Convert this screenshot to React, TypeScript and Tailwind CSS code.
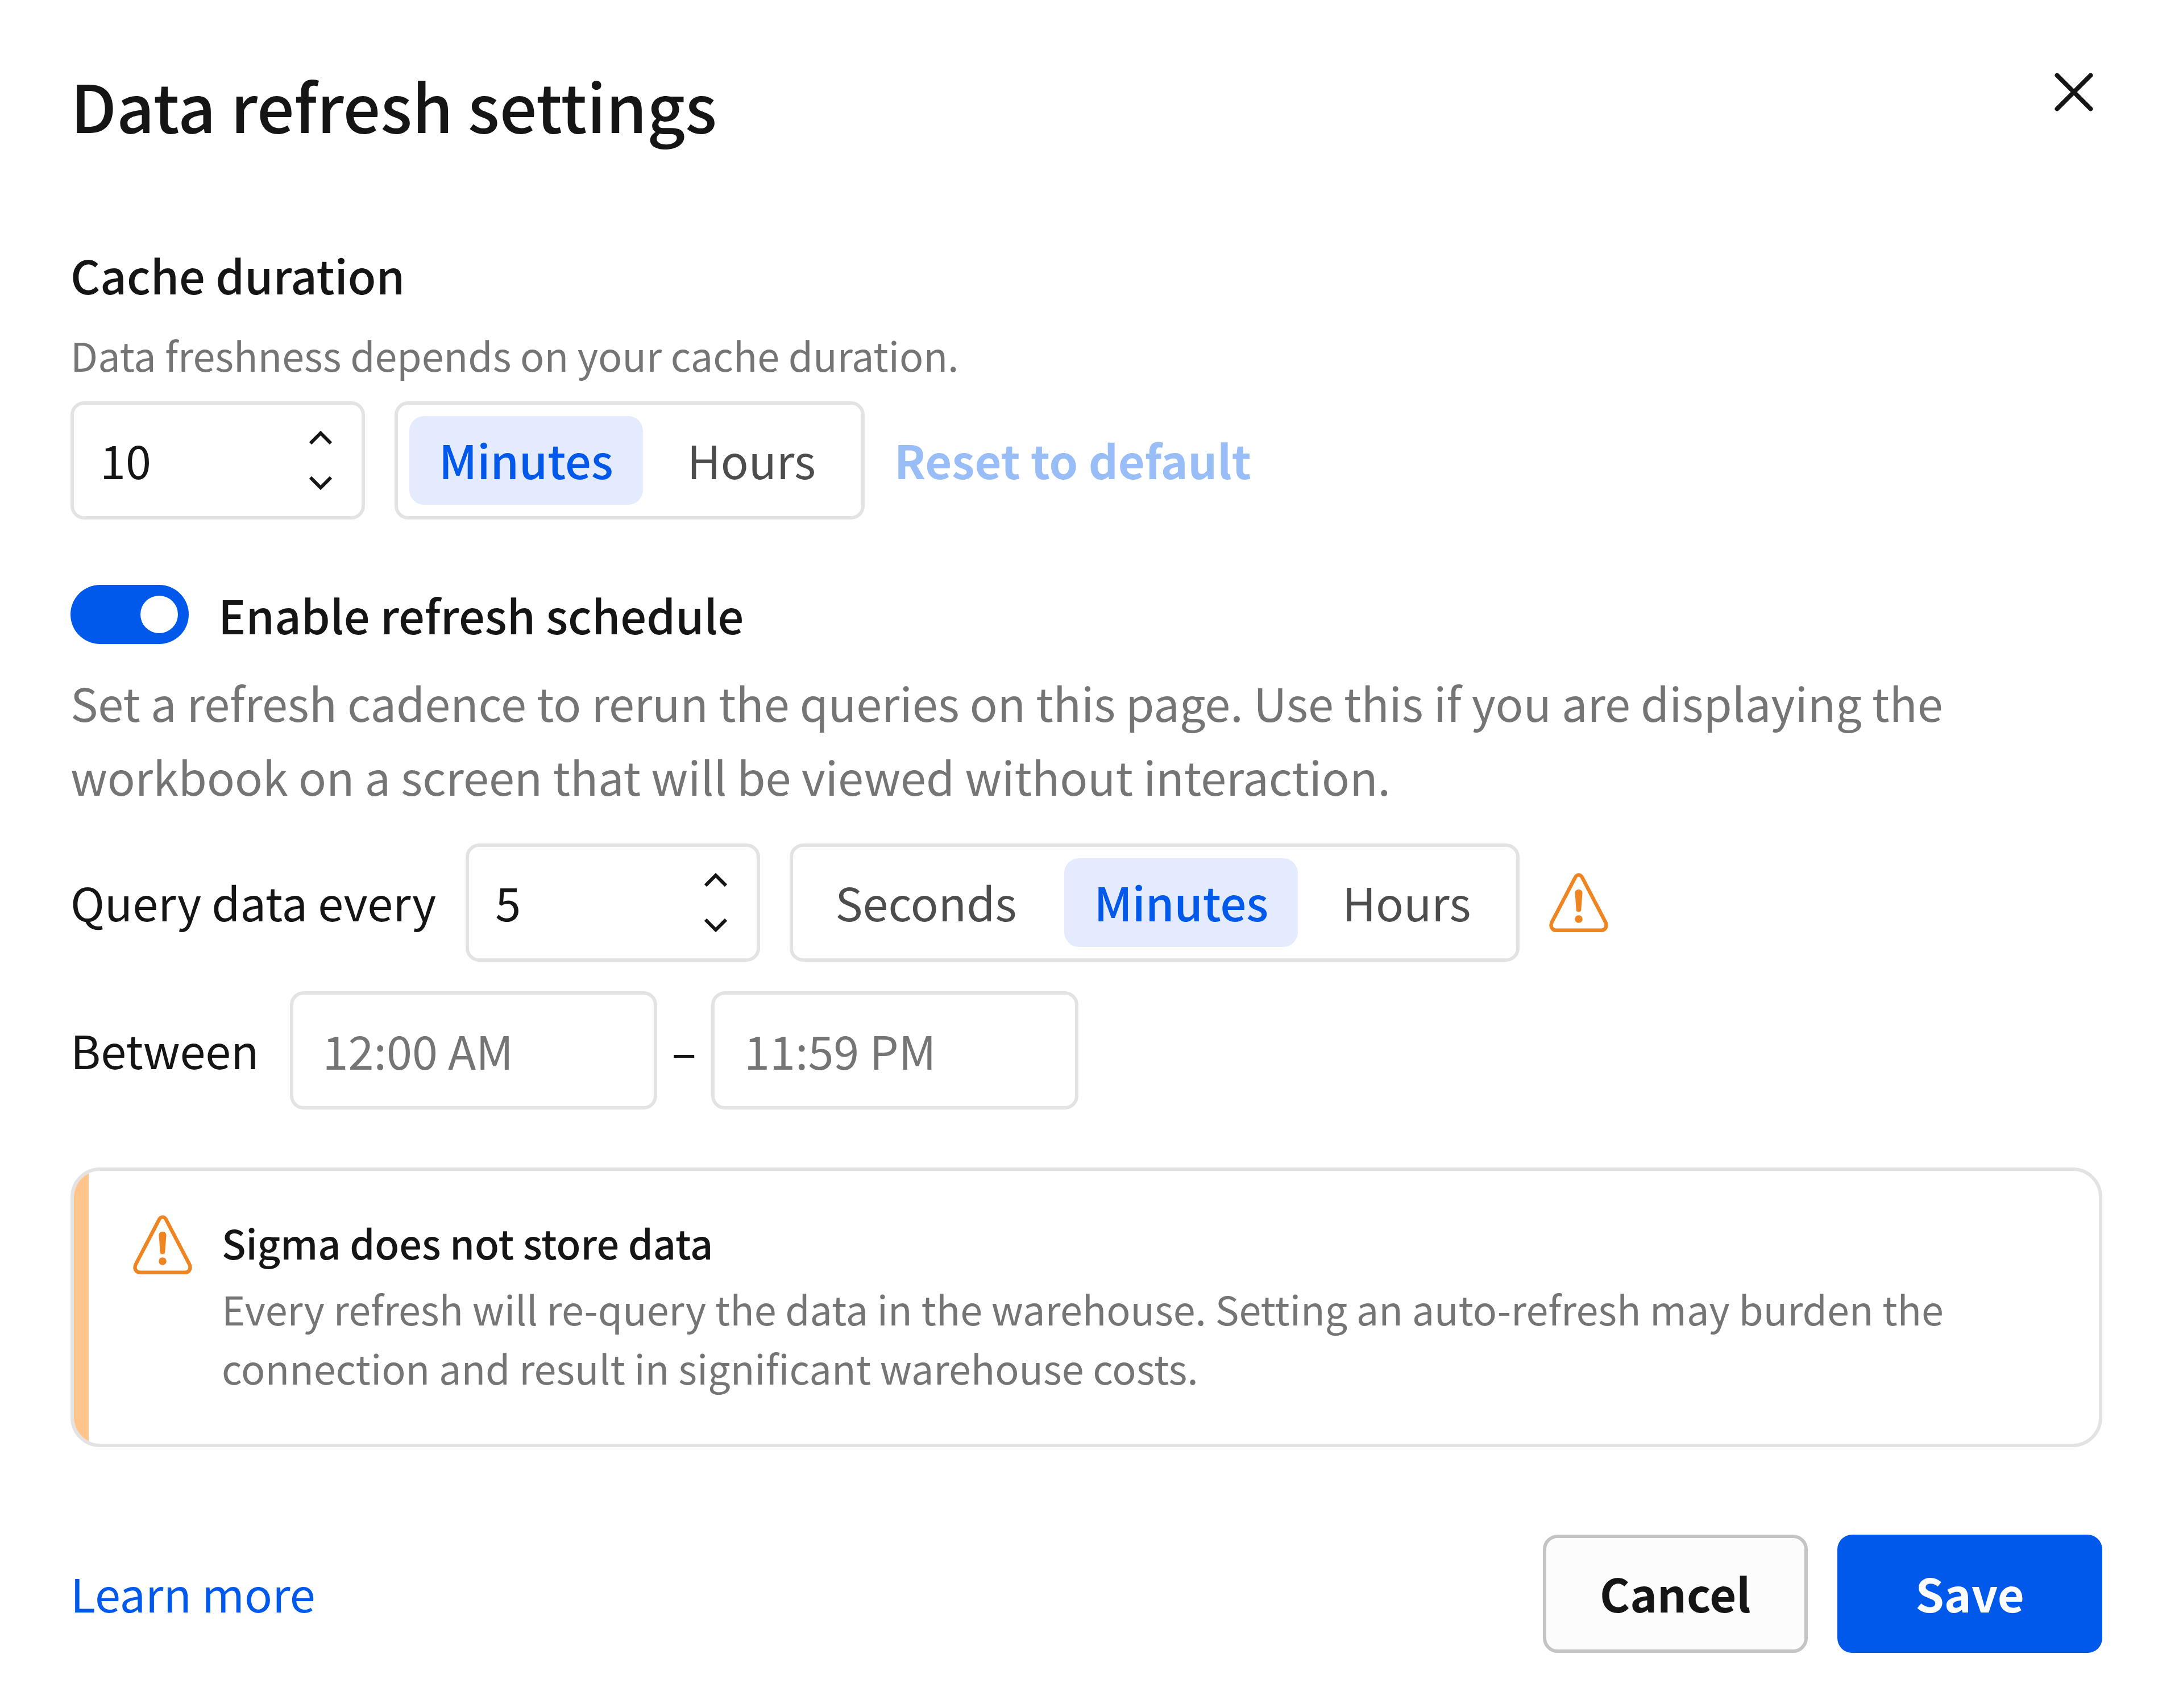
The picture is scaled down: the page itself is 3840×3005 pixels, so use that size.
import { useState } from "react";
import clsx from "clsx";

function WarningIcon() {
  return (
    <svg viewBox="0 0 104 104" className="h-[104px] w-[104px] shrink-0" fill="none" aria-hidden="true">
      <path
        d="M46 7.5 L5 86 C1 94 5.5 100.8 12.5 100.8 H91.5 C98.5 100.8 103 94 99 86 L58 7.5 C55 2 49 2 46 7.5 Z"
        stroke="#ef8520"
        strokeWidth="6.4"
        strokeLinejoin="round"
      />
      <path
        d="M45.5 35.5 C45.2 31.5 48 29 52 29 C56 29 58.8 31.5 58.5 35.5 L56.2 66 C56 69.2 48 69.2 47.8 66 Z"
        fill="#ef8520"
      />
      <circle cx="52" cy="81" r="6.8" fill="#ef8520" />
    </svg>
  );
}

function Chevron({ up = false }: { up?: boolean }) {
  return (
    <svg viewBox="0 0 40 24" className="h-6 w-10" fill="none" stroke="#151515" strokeWidth="6" aria-hidden="true">
      <path d={up ? "M2 22 L20 4 L38 22" : "M2 2 L20 20 L38 2"} />
    </svg>
  );
}

type NumberFieldProps = {
  label: string;
  value: number;
  onChange: (value: number) => void;
};

function NumberField({ label, value, onChange }: NumberFieldProps) {
  return (
    <div className="flex h-[208px] w-[518px] items-center rounded-[24px] border-[6px] border-[#e3e3e3] pr-[52px] pl-[46px]">
      <input
        type="text"
        inputMode="numeric"
        aria-label={label}
        value={value}
        onChange={(event) => onChange(Number(event.target.value) || 0)}
        className="min-w-0 flex-1 pb-1 leading-[130px] outline-none"
      />
      <div className="flex flex-col gap-[56px]">
        <button type="button" aria-label={`Increase ${label}`} onClick={() => onChange(value + 1)}>
          <Chevron up />
        </button>
        <button type="button" aria-label={`Decrease ${label}`} onClick={() => onChange(Math.max(0, value - 1))}>
          <Chevron />
        </button>
      </div>
    </div>
  );
}

type SegmentedProps = {
  name: string;
  label: string;
  options: string[];
  value: string;
  onChange: (value: string) => void;
};

function Segmented({ name, label, options, value, onChange }: SegmentedProps) {
  return (
    <div
      role="radiogroup"
      aria-label={label}
      className="flex h-[208px] items-center gap-6 rounded-[24px] border-[6px] border-[#e3e3e3] px-[20px]"
    >
      {options.map((option) => (
        <label
          key={option}
          className={clsx(
            "relative flex h-[156px] cursor-pointer items-center rounded-[26px] pb-1",
            option === value ? "bg-[#e5ebfe] px-[52px] font-medium text-[#0059eb]" : "pr-[60px] pl-[54px] text-[#4d4d4d]"
          )}
        >
          <input
            type="radio"
            name={name}
            checked={option === value}
            onChange={() => onChange(option)}
            className="sr-only"
          />
          {option}
        </label>
      ))}
    </div>
  );
}

export default function App() {
  const [cache, setCache] = useState(10);
  const [cacheUnit, setCacheUnit] = useState("Minutes");
  const [enabled, setEnabled] = useState(true);
  const [every, setEvery] = useState(5);
  const [everyUnit, setEveryUnit] = useState("Minutes");

  return (
    <main className="min-h-screen bg-white pt-[118px] pr-[142px] pb-[92px] pl-[124px] font-['Noto_Sans_CJK_SC',sans-serif] text-[81px] leading-[130px] text-[#151515]">
      <header className="flex items-start justify-between">
        <h1 className="text-[116px] leading-[130px] font-medium">Data refresh settings</h1>
        <button type="button" aria-label="Close" className="px-4 py-[10px]">
          <svg viewBox="0 0 68 68" className="h-[68px] w-[68px]" fill="none" stroke="#151515" aria-hidden="true">
            <path d="M4.5 4.5 L63.5 63.5 M63.5 4.5 L4.5 63.5" strokeWidth="8" strokeLinecap="round" />
          </svg>
        </button>
      </header>

      <section className="mt-[170px]">
        <h2 className="font-medium">Cache duration</h2>
        <p className="mt-[24px] text-[70px] leading-[104px] text-[#757575]">
          Data freshness depends on your cache duration.
        </p>
        <div className="mt-[30px] flex items-center gap-[52px]">
          <NumberField label="Cache duration" value={cache} onChange={setCache} />
          <Segmented
            name="cache-unit"
            label="Cache duration unit"
            options={["Minutes", "Hours"]}
            value={cacheUnit}
            onChange={setCacheUnit}
          />
          <button
            type="button"
            onClick={() => {
              setCache(10);
              setCacheUnit("Minutes");
            }}
            className="pb-1 font-semibold text-[#99bdf7]"
          >
            Reset to default
          </button>
        </div>
      </section>

      <section className="mt-[102px]">
        <label className="flex w-fit items-center gap-[52px] font-medium">
          <input
            type="checkbox"
            role="switch"
            checked={enabled}
            onChange={(event) => setEnabled(event.target.checked)}
            className="flex h-[104px] w-[208px] shrink-0 appearance-none items-center rounded-full bg-[#c4c4c4] px-[19px] before:h-[66px] before:w-[66px] before:rounded-full before:bg-white checked:justify-end checked:bg-[#0059eb]"
          />
          Enable refresh schedule
        </label>
        <p className="mt-[24px] max-w-[3400px] text-[#757575]">
          Set a refresh cadence to rerun the queries on this page. Use this if you are displaying the workbook on a
          screen that will be viewed without interaction.
        </p>
        <div className="mt-[54px] flex items-center gap-[52px]">
          <span className="pb-1">Query data every</span>
          <NumberField label="Query data every" value={every} onChange={setEvery} />
          <Segmented
            name="every-unit"
            label="Query interval unit"
            options={["Seconds", "Minutes", "Hours"]}
            value={everyUnit}
            onChange={setEveryUnit}
          />
          <WarningIcon />
        </div>
        <div className="mt-[52px] flex items-center">
          <label htmlFor="between-start" className="pb-1">
            Between
          </label>
          <input
            id="between-start"
            type="text"
            placeholder="12:00 AM"
            className="ml-[54px] h-[208px] w-[646px] rounded-[24px] border-[6px] border-[#e3e3e3] px-[52px] pb-1 outline-none placeholder:text-[#757575]"
          />
          <span className="px-[26px] pb-1">–</span>
          <input
            type="text"
            aria-label="Between end"
            placeholder="11:59 PM"
            className="h-[208px] w-[646px] rounded-[24px] border-[6px] border-[#e3e3e3] px-[52px] pb-1 outline-none placeholder:text-[#757575]"
          />
        </div>
      </section>

      <aside className="mt-[102px] flex overflow-hidden rounded-[52px] border-[6px] border-[#e3e3e3]">
        <div className="w-[26px] shrink-0 bg-[#ffc58d]" />
        <div className="flex gap-[52px] pt-[74px] pb-[82px] pl-[78px] text-[70px] leading-[104px]">
          <div className="pt-1">
            <WarningIcon />
          </div>
          <div>
            <h3 className="font-medium">Sigma does not store data</h3>
            <p className="mt-[12px] max-w-[3100px] text-[#757575]">
              Every refresh will re-query the data in the warehouse. Setting an auto-refresh may burden the connection
              and result in significant warehouse costs.
            </p>
          </div>
        </div>
      </aside>

      <footer className="mt-[154px] flex items-center justify-between">
        <a href="#learn-more" className="pb-1 text-[#0059eb]">
          Learn more
        </a>
        <div className="flex gap-[52px] font-semibold">
          <button
            type="button"
            className="h-[208px] w-[466px] rounded-[26px] border-[6px] border-[#c4c4c4] bg-[#fcfcfc] pb-1"
          >
            Cancel
          </button>
          <button type="button" className="h-[208px] w-[466px] rounded-[26px] bg-[#0059eb] pb-1 text-[#fcfcfc]">
            Save
          </button>
        </div>
      </footer>
    </main>
  );
}
